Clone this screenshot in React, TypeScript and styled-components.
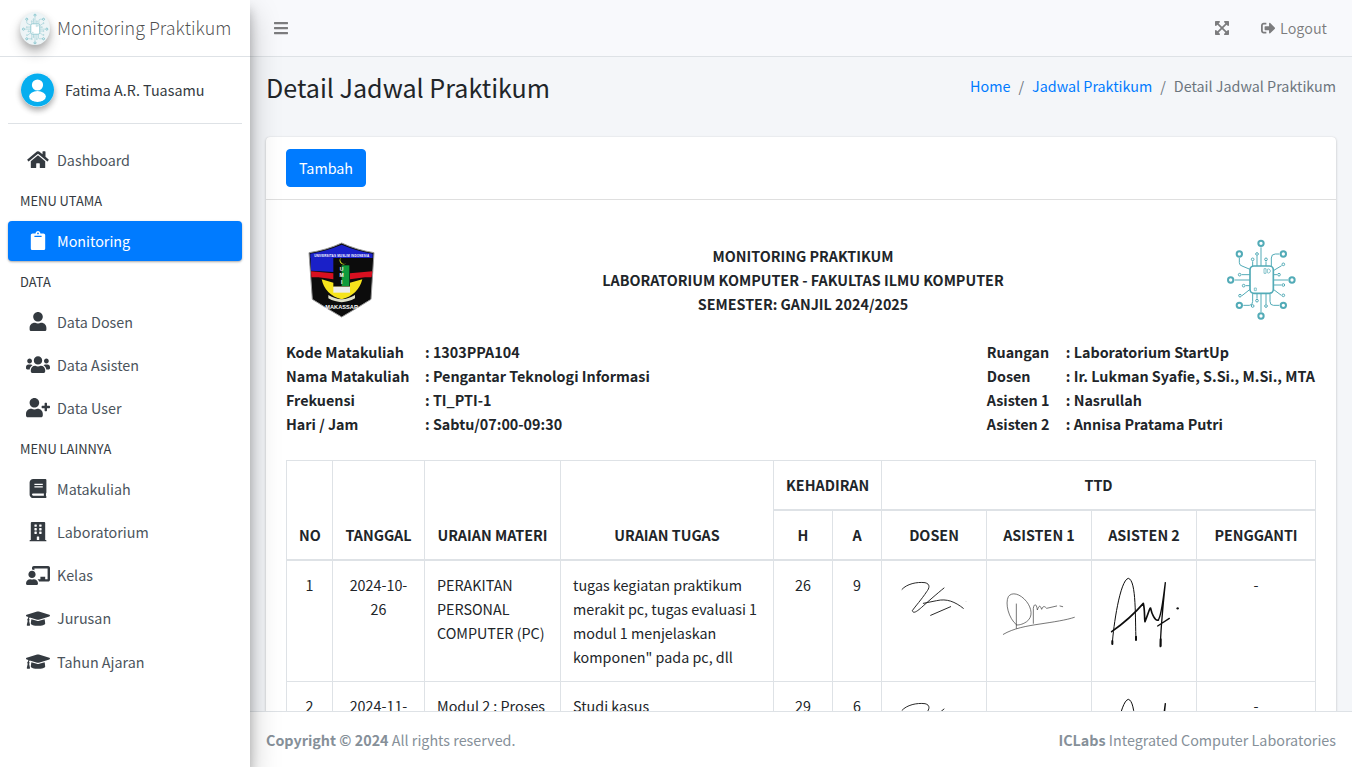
import React from 'react';
import styled, { createGlobalStyle } from 'styled-components';
import {
  FaBars, FaBook, FaBuilding, FaChalkboardTeacher, FaClipboard, FaExpandArrowsAlt,
  FaGraduationCap, FaHome, FaSignOutAlt, FaUser, FaUserPlus, FaUsers,
} from 'react-icons/fa';

const Global = createGlobalStyle`
  html, body { margin: 0; padding: 0; height: 100%; overflow: hidden; }
  body {
    font-family: "Noto Sans CJK SC", "Open Sans", sans-serif;
    font-size: 14.33px; line-height: 24px; color: #212529; background: #f4f6f9;
  }
  * { box-sizing: border-box; }
`;

const Shell = styled.div`display: flex; width: 100%; height: 100vh; overflow: hidden;`;

const Sidebar = styled.aside`
  position: relative; z-index: 10; flex: 0 0 250px; background: #fff;
  box-shadow: 0 14px 28px rgba(0,0,0,.25), 0 10px 10px rgba(0,0,0,.22);
`;
const Brand = styled.div`
  height: 57px; border-bottom: 1px solid #dee2e6; display: flex; align-items: center; padding-left: 20px;
`;
const BrandMark = styled.div`
  width: 30px; height: 33px; border-radius: 50%; background: #eaf3f5; opacity: .85; margin-right: 7px;
  box-shadow: 0 8px 12px rgba(0,0,0,.25), 0 3px 6px rgba(0,0,0,.2); display: flex; overflow: hidden;
`;
const BrandText = styled.span`font-size: 17.9px; font-weight: 300; color: rgba(0,0,0,.7); line-height: 30px; white-space: nowrap; margin-top: -2px;`;
const UserPanel = styled.div`
  margin: 0 8px 16px; height: 67px; border-bottom: 1px solid #dee2e6; display: flex; align-items: center; padding: 0 0 0 13px;
`;
const Avatar = styled.div`
  width: 33px; height: 34px; border-radius: 50%; margin-right: 11px; display: flex;
  box-shadow: 0 3px 6px rgba(0,0,0,.16), 0 3px 6px rgba(0,0,0,.23);
`;
const UserName = styled.span`color: #343a40;`;
const Nav = styled.nav`display: flex; flex-direction: column; padding: 0 8px;`;
const NavItem = styled.div<{ $active?: boolean }>`
  display: flex; align-items: center; height: 40px; margin-bottom: 3.2px; padding-left: 16px; border-radius: 4px;
  color: ${p => (p.$active ? '#fff' : '#343a40')};
  background: ${p => (p.$active ? '#007bff' : 'transparent')};
  box-shadow: ${p => (p.$active ? '0 1px 3px rgba(0,0,0,.12), 0 1px 2px rgba(0,0,0,.24)' : 'none')};
`;
const NavIcon = styled.span`
  width: 28px; margin-right: 5px; display: flex; justify-content: center;
  svg { width: 28px; height: 19.2px; flex: none; }
`;
const NavLabel = styled.span<{ $active?: boolean }>`
  color: ${p => (p.$active ? '#fff' : '#4b545c')};
`;
const NavHeader = styled.div`
  height: 37.65px; padding: 7px 12px; font-size: 12.9px; line-height: 21.6px; color: #343a40;
`;

const Main = styled.div`flex: 1; min-width: 0; display: flex; flex-direction: column; height: 100vh;`;
const Topbar = styled.header`
  flex: 0 0 57px; background: #f8f9fc; border-bottom: 1px solid #dee2e6; display: flex; align-items: center;
  padding: 0 24px 0 23px; color: rgba(0,0,0,.5);
`;
const TopIcon = styled.span`display: flex; font-size: 16px;`;
const TopSpacer = styled.div`flex: 1;`;
const LogoutLink = styled.span`display: flex; align-items: center; gap: 5px; margin-left: 31px; margin-right: 1px;`;

const Content = styled.main`flex: 1; min-height: 0; overflow: hidden; padding: 0 16px;`;
const ContentHead = styled.div`height: 80px; padding-bottom: 20px; display: flex; justify-content: space-between; align-items: center;`;
const Title = styled.h1`margin: 0; font-size: 25.1px; font-weight: 400; line-height: 36px; color: #212529;`;
const Crumbs = styled.div`display: flex; color: #6c757d; margin-top: -3px;`;
const CrumbLink = styled.span`color: #007bff;`;
const CrumbSep = styled.span`padding: 0 8px; color: #6c757d;`;

const Card = styled.section`
  background: #fff; border-radius: 4px; box-shadow: 0 0 1px rgba(0,0,0,.125), 0 1px 3px rgba(0,0,0,.2);
`;
const CardHead = styled.div`height: 63px; padding: 12px 20px; border-bottom: 1px solid rgba(0,0,0,.125);`;
const PrimaryButton = styled.button`
  width: 80px; height: 38px; border: 1px solid #007bff; border-radius: 4px; background: #007bff; color: #fff;
  font: inherit; padding: 0;
`;
const CardBody = styled.div`padding: 20px;`;

const Letterhead = styled.div`display: flex; align-items: center; justify-content: space-between; height: 120px; margin-bottom: 1px;`;
const LogoBox = styled.div`flex: 0 0 112px; display: flex; justify-content: center;`;
const LetterTitle = styled.div`font-weight: 700; text-align: center; line-height: 24px; flex: 1; padding-left: 4px;`;

const InfoRow = styled.div`display: flex; justify-content: space-between; margin-bottom: 24px; margin-top: -1px; padding-right: 1px;`;
const InfoGrid = styled.div<{ $label: number }>`
  display: grid; grid-template-columns: ${p => p.$label}px auto; font-weight: 700; line-height: 24px;
`;

const Table = styled.table`
  width: calc(100% - 1px); table-layout: fixed; border-collapse: collapse; color: #212529;
`;
const HeadCell = styled.th`
  border: 1px solid #dee2e6; border-bottom-width: 2px; padding: 12px; font-weight: 700; text-align: center; vertical-align: bottom;
  overflow: hidden; white-space: nowrap;
`;
const Cell = styled.td<{ $center?: boolean }>`
  border: 1px solid #dee2e6; padding: 12px; vertical-align: top;
  text-align: ${p => (p.$center ? 'center' : 'left')};
`;
const SigSvg = styled.svg`display: block; width: 80px; height: 80px;`;

const TEAL = '#52abb7';
const chipBig: [number, number][] = [[153,40],[88,72],[220,72],[62,150],[246,150],[88,226],[220,226],[153,258]];
const chipSmall: [number, number][] = [[128,88],[141,72],[168,88],[220,103],[89,134],[207,134],[101,167],[220,165],[90,197],[220,196],[141,212],[168,228],[128,228]];
const chipLines = [
  'M153 52V108','M88 84V98Q88 106 96 108L120 118','M208 72H196Q184 72 184 84V108','M74 150H120','M234 150H190',
  'M100 226H118Q128 226 128 214V190','M208 226H190Q180 226 180 214V190','M153 246V190',
  'M128 94V108','M141 78V108','M168 94V108','M215 107L190 122','M95 134H120','M201 134H190','M107 167H120','M214 165H190','M96 197L120 178','M214 196L190 178','M141 206V190','M168 222V190',
];

const ChipArt: React.FC = () => (
  <>
    {chipLines.map(d => <path key={d} d={d} fill="none" stroke={TEAL} strokeWidth={3} />)}
    {chipBig.map(([x, y]) => <circle key={`${x}-${y}`} cx={x} cy={y} r={8} fill="#fff" stroke={TEAL} strokeWidth={6} />)}
    {chipSmall.map(([x, y]) => <circle key={`${x}-${y}`} cx={x} cy={y} r={4} fill="#fff" stroke={TEAL} strokeWidth={3} />)}
    <rect x={120} y={108} width={70} height={82} rx={12} fill="#fff" stroke={TEAL} strokeWidth={5} />
    <path d="M162 116h6v14h-6zM172 118a6 6 0 1 1 0 10zM133 174h6v8h-6z" fill="none" stroke={TEAL} strokeWidth={2} />
  </>
);

const LOGO_FONT = 'Liberation Sans, sans-serif';
const UmiLogo: React.FC = () => (
  <svg width={100} height={100} viewBox="-39 -30 300 300" aria-label="Logo UMI">
    <path d="M12 38Q65 30 110 9Q155 30 207 38L198 178Q155 205 110 231Q65 205 22 178Z" fill="#0c0c0c" stroke="#999" strokeWidth={3} />
    <path d="M16 41Q65 33 110 14Q155 33 203 41V54H16Z" fill="#1a20c8" />
    <path d="M17 54H85V96L18 92Z" fill="#1a20c8" />
    <path d="M18 94L85 100V118L40 112L19 112ZM202 94L135 100V118L180 112L200 112Z" fill="#d81020" />
    <path d="M50 118Q60 165 110 178Q160 165 172 118L135 128V140H85V128Z" fill="#f6e41c" />
    <path d="M87 76H110V138H87Z" fill="#0a0a0a" />
    <path d="M110 76H133V138H110Z" fill="#109a3c" />
    <path d="M85 140H135V158H85Z" fill="#ececec" />
    <path d="M70 165Q110 190 150 165V175Q110 198 70 175Z" fill="#e0e0c8" />
    <path d="M112 50a12 12 0 1 0 12 20a10 10 0 1 1 -12 -20Z" fill="#d0e020" />
    <text x={110} y={50} fontSize={9} fontWeight={700} fill="#fff" textAnchor="middle" fontFamily={LOGO_FONT} textLength={165}>UNIVERSITAS MUSLIM INDONESIA</text>
    <text x={110} y={92} fontSize={15} fontWeight={700} fill="#fff" textAnchor="middle" fontFamily={LOGO_FONT}>U</text>
    <text x={110} y={112} fontSize={15} fontWeight={700} fill="#fff" textAnchor="middle" fontFamily={LOGO_FONT}>M</text>
    <text x={110} y={132} fontSize={15} fontWeight={700} fill="#fff" textAnchor="middle" fontFamily={LOGO_FONT}>I</text>
    <text x={110} y={207} fontSize={17} fontWeight={700} fill="#fff" textAnchor="middle" fontFamily={LOGO_FONT} textLength={98}>MAKASSAR</text>
  </svg>
);

const SignatureOne: React.FC = () => (
  <SigSvg viewBox="42 39 240 240">
    <g fill="none" stroke="#1a1a1a" strokeWidth={2.8} strokeLinecap="round" strokeLinejoin="round">
      <path d="M66 88C80 72 110 65 135 68C152 72 148 85 140 95C125 118 105 140 97 152C100 162 110 155 125 142C140 128 170 102 192 84" />
      <path d="M130 130L170 122C200 115 225 125 250 145" />
      <path d="M152 166L212 140" />
    </g>
    <circle cx={258} cy={124} r={1.2} fill="#999" />
  </SigSvg>
);
const SignatureTwo: React.FC = () => (
  <SigSvg viewBox="357 39 240 240">
    <g fill="none" stroke="#444" strokeWidth={2.2} strokeLinecap="round" strokeLinejoin="round">
      <path d="M410 195C385 175 375 130 385 110C395 95 420 100 440 125C455 145 460 170 440 185C425 195 415 195 410 195" />
      <path d="M409 132V205" />
      <path d="M460 190V145C462 130 470 130 472 150C478 135 480 135 485 148C490 135 495 140 500 145L530 138M540 138L548 140" />
      <path d="M370 223C400 205 440 198 480 192C520 186 560 180 583 172" />
    </g>
  </SigSvg>
);
const SignatureThree: React.FC = () => (
  <SigSvg viewBox="672 39 240 240">
    <g fill="none" stroke="#0d0d0d" strokeLinecap="round" strokeLinejoin="round">
      <path strokeWidth={3} d="M697 250C700 200 720 60 745 55C770 60 765 180 768 238" />
      <path strokeWidth={5} d="M695 215C730 190 760 165 790 130C795 150 793 180 795 185C805 160 810 140 812 145C815 160 825 185 835 180" />
      <path strokeWidth={4} d="M835 180C845 165 850 110 856 68C850 130 842 200 841 260M833 198L868 175" />
      <path strokeWidth={6} d="M697 243V252M768 230V240M842 238V258" />
    </g>
    <circle cx={893} cy={145} r={3.5} fill="#111" />
  </SigSvg>
);

const columns = [46, 92, 136, 213, 59, 49, 105, 105, 105, 119];

const menu = {
  data: [
    { icon: <FaUser />, label: 'Data Dosen' },
    { icon: <FaUsers />, label: 'Data Asisten' },
    { icon: <FaUserPlus />, label: 'Data User' },
  ],
  other: [
    { icon: <FaBook />, label: 'Matakuliah' },
    { icon: <FaBuilding />, label: 'Laboratorium' },
    { icon: <FaChalkboardTeacher />, label: 'Kelas' },
    { icon: <FaGraduationCap />, label: 'Jurusan' },
    { icon: <FaGraduationCap />, label: 'Tahun Ajaran' },
  ],
};

const rows = [
  { no: 1, date: '2024-10-26', materi: 'PERAKITAN PERSONAL COMPUTER (PC)', tugas: 'tugas kegiatan praktikum merakit pc, tugas evaluasi 1 modul 1 menjelaskan komponen" pada pc, dll', h: 26, a: 9 },
  { no: 2, date: '2024-11-02', materi: 'Modul 2 : Proses Instalasi', tugas: 'Studi kasus', h: 29, a: 6 },
];

const leftInfo = [
  ['Kode Matakuliah', ': 1303PPA104'],
  ['Nama Matakuliah', ': Pengantar Teknologi Informasi'],
  ['Frekuensi', ': TI_PTI-1'],
  ['Hari / Jam', ': Sabtu/07:00-09:30'],
];
const rightInfo = [
  ['Ruangan', ': Laboratorium StartUp'],
  ['Dosen', ': Ir. Lukman Syafie, S.Si., M.Si., MTA'],
  ['Asisten 1', ': Nasrullah'],
  ['Asisten 2', ': Annisa Pratama Putri'],
];

const MenuRow: React.FC<{ icon: React.ReactNode; label: string }> = ({ icon, label }) => (
  <NavItem>
    <NavIcon>{icon}</NavIcon>
    <NavLabel>{label}</NavLabel>
  </NavItem>
);

const FootBar = styled.footer`
  flex: 0 0 56px; background: #fff; border-top: 1px solid #dee2e6; padding: 0 16px; color: #869099;
  display: flex; justify-content: space-between; align-items: center;
`;
function Footer() {
  return (
    <FootBar>
      <span><b>Copyright © 2024</b> All rights reserved.</span>
      <span><b>ICLabs</b> Integrated Computer Laboratories</span>
    </FootBar>
  );
}

export default function App() {
  return (
    <Shell>
      <Global />
      <Sidebar>
        <Brand>
          <BrandMark>
            <svg width={30} height={33} viewBox="40 15 226 260" aria-hidden="true"><ChipArt /></svg>
          </BrandMark>
          <BrandText>Monitoring Praktikum</BrandText>
        </Brand>
        <UserPanel>
          <Avatar>
            <svg width={33} height={34} viewBox="0 0 33 34" aria-hidden="true">
              <circle cx={16.5} cy={17} r={16.5} fill="#06aeef" />
              <circle cx={16.5} cy={12} r={5.6} fill="#fff" />
              <ellipse cx={16.5} cy={23.5} rx={8.4} ry={5.4} fill="#fff" />
            </svg>
          </Avatar>
          <UserName>Fatima A.R. Tuasamu</UserName>
        </UserPanel>
        <Nav>
          <MenuRow icon={<FaHome />} label="Dashboard" />
          <NavHeader>MENU UTAMA</NavHeader>
          <NavItem $active>
            <NavIcon><FaClipboard /></NavIcon>
            <NavLabel $active>Monitoring</NavLabel>
          </NavItem>
          <NavHeader>DATA</NavHeader>
          {menu.data.map(m => <MenuRow key={m.label} {...m} />)}
          <NavHeader>MENU LAINNYA</NavHeader>
          {menu.other.map(m => <MenuRow key={m.label} {...m} />)}
        </Nav>
      </Sidebar>
      <Main>
        <Topbar>
          <TopIcon><FaBars /></TopIcon>
          <TopSpacer />
          <TopIcon><FaExpandArrowsAlt /></TopIcon>
          <LogoutLink><FaSignOutAlt /> Logout</LogoutLink>
        </Topbar>
        <Content>
          <ContentHead>
            <Title>Detail Jadwal Praktikum</Title>
            <Crumbs>
              <CrumbLink>Home</CrumbLink><CrumbSep>/</CrumbSep>
              <CrumbLink>Jadwal Praktikum</CrumbLink><CrumbSep>/</CrumbSep>
              <span>Detail Jadwal Praktikum</span>
            </Crumbs>
          </ContentHead>
          <Card>
            <CardHead><PrimaryButton>Tambah</PrimaryButton></CardHead>
            <CardBody>
              <Letterhead>
                <LogoBox><UmiLogo /></LogoBox>
                <LetterTitle>
                  MONITORING PRAKTIKUM<br />
                  LABORATORIUM KOMPUTER - FAKULTAS ILMU KOMPUTER<br />
                  SEMESTER: GANJIL 2024/2025
                </LetterTitle>
                <LogoBox>
                  <svg width={100} height={100} viewBox="0 0 300 300" aria-label="Logo ICLabs"><ChipArt /></svg>
                </LogoBox>
              </Letterhead>
              <InfoRow>
                <InfoGrid $label={139}>
                  {leftInfo.flat().map((t, i) => <span key={i}>{t}</span>)}
                </InfoGrid>
                <InfoGrid $label={79}>
                  {rightInfo.flat().map((t, i) => <span key={i}>{t}</span>)}
                </InfoGrid>
              </InfoRow>
              <Table>
                <colgroup>{columns.map((w, i) => <col key={i} width={w} />)}</colgroup>
                <thead>
                  <tr>
                    <HeadCell rowSpan={2}>NO</HeadCell>
                    <HeadCell rowSpan={2}>TANGGAL</HeadCell>
                    <HeadCell rowSpan={2}>URAIAN MATERI</HeadCell>
                    <HeadCell rowSpan={2}>URAIAN TUGAS</HeadCell>
                    <HeadCell colSpan={2}>KEHADIRAN</HeadCell>
                    <HeadCell colSpan={4}>TTD</HeadCell>
                  </tr>
                  <tr>
                    <HeadCell>H</HeadCell>
                    <HeadCell>A</HeadCell>
                    <HeadCell>DOSEN</HeadCell>
                    <HeadCell>ASISTEN 1</HeadCell>
                    <HeadCell>ASISTEN 2</HeadCell>
                    <HeadCell>PENGGANTI</HeadCell>
                  </tr>
                </thead>
                <tbody>
                  {rows.map(r => (
                    <tr key={r.no}>
                      <Cell $center>{r.no}</Cell>
                      <Cell $center>{r.date}</Cell>
                      <Cell>{r.materi}</Cell>
                      <Cell>{r.tugas}</Cell>
                      <Cell $center>{r.h}</Cell>
                      <Cell $center>{r.a}</Cell>
                      <Cell><SignatureOne /></Cell>
                      <Cell><SignatureTwo /></Cell>
                      <Cell><SignatureThree /></Cell>
                      <Cell $center>-</Cell>
                    </tr>
                  ))}
                </tbody>
              </Table>
            </CardBody>
          </Card>
        </Content>
        <Footer />
      </Main>
    </Shell>
  );
}
